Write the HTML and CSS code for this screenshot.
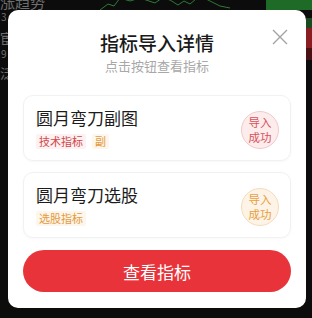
FILE: index.html
```html
<!DOCTYPE html>
<html lang="zh-CN">
<head>
<meta charset="utf-8">
<title>指标导入详情</title>
<link rel="stylesheet" href="styles.css">
</head>
<body>
<div class="backdrop">
  <span class="bg-text bg-t1">涨趋势</span>
  <span class="bg-text bg-l1">3</span>
  <span class="bg-text bg-l2">宦</span>
  <span class="bg-text bg-l3">9</span>
  <span class="bg-text bg-l4">泛</span>
  <svg class="bg-chart" width="140" height="12" viewBox="0 0 140 12"><polyline points="0,12 8,6 14,8 20,0 30,3 40,0 55,5 62,0 70,2 78,7 84,3 90,6 96,1 104,0 112,4 120,8 130,10" fill="none" stroke="#2f7a35" stroke-width="1"/></svg>
  <div class="bg-green"></div>
  <div class="bg-green2"></div>
  <div class="bg-red"></div>
  <div class="bg-red2"></div>
</div>
<div class="modal">
  <button class="close" aria-label="关闭">
    <svg width="16" height="16" viewBox="0 0 16 16"><path d="M1 1 L15 15 M15 1 L1 15" stroke="#a3a3a3" stroke-width="1.4" fill="none"/></svg>
  </button>
  <h1 class="title">指标导入详情</h1>
  <p class="subtitle">点击按钮查看指标</p>
  <div class="list">
    <div class="item">
      <div class="info">
        <div class="name">圆月弯刀副图</div>
        <div class="tags">
          <span class="tag tag-red">技术指标</span>
          <span class="tag tag-orange">副</span>
        </div>
      </div>
      <div class="badge badge-red">导入<br>成功</div>
    </div>
    <div class="item">
      <div class="info">
        <div class="name">圆月弯刀选股</div>
        <div class="tags">
          <span class="tag tag-orange">选股指标</span>
        </div>
      </div>
      <div class="badge badge-orange">导入<br>成功</div>
    </div>
  </div>
  <button class="primary">查看指标</button>
</div>
</body>
</html>
```
FILE: styles.css
```css
* { box-sizing: border-box; }
html, body { margin: 0; padding: 0; }
body {
  width: 312px;
  height: 318px;
  overflow: hidden;
  background: #0c0c0c;
  font-family: "Noto Sans CJK SC", "Noto Sans", sans-serif;
  position: relative;
  padding-top: 10px;
}
.backdrop { position: absolute; inset: 0; }
.bg-text { position: absolute; color: #6e6e6e; line-height: 1; }
.bg-t1 { left: 0; top: -6px; font-size: 15px; }
.bg-l1 { left: 1px; top: 12px; font-size: 10px; }
.bg-l2 { left: 0; top: 31px; font-size: 13px; }
.bg-l3 { left: 1px; top: 49px; font-size: 10px; }
.bg-l4 { left: 0; top: 66px; font-size: 13px; }
.bg-chart { position: absolute; left: 100px; top: -2px; }
.bg-green { position: absolute; left: 266px; top: 0; width: 46px; height: 10px; background: #1d6b27; }
.bg-green2 { position: absolute; left: 306px; top: 18px; width: 6px; height: 10px; background: #1b4a20; }
.bg-red { position: absolute; left: 306px; top: 28px; width: 6px; height: 20px; background: #8a1c22; }
.bg-red2 { position: absolute; left: 306px; top: 48px; width: 6px; height: 12px; background: #4a1114; }

.modal {
  position: relative;
  margin: 0 6px 0 8px;
  width: 298px;
  background: #fff;
  border-radius: 10px;
  padding: 20px 15px 16px;
  display: flex;
  flex-direction: column;
}
.close {
  position: absolute;
  top: 19px;
  right: 18px;
  width: 16px;
  height: 16px;
  padding: 0;
  border: 0;
  background: none;
  display: flex;
}
.title {
  margin: 0;
  text-align: center;
  font-size: 19px;
  line-height: 26px;
  font-weight: 500;
  color: #1a1a1a;
}
.subtitle {
  margin: 1px 0 0;
  text-align: center;
  font-size: 13px;
  line-height: 18px;
  color: #a8a8a8;
}
.list {
  margin-top: 20px;
  display: flex;
  flex-direction: column;
  gap: 11px;
}
.item {
  height: 66px;
  border: 1px solid #f1f1f1;
  border-radius: 10px;
  box-shadow: 0 1px 3px rgba(0,0,0,0.03);
  padding: 10px 11px 0 12px;
  display: flex;
  align-items: center;
  justify-content: space-between;
}
.info { align-self: flex-start; }
.name {
  font-size: 17px;
  line-height: 24px;
  color: #1c1c1c;
}
.tags {
  margin-top: 4px;
  display: flex;
  gap: 6px;
}
.tag {
  font-size: 11px;
  line-height: 15px;
  padding: 0 3px;
  border-radius: 2px;
}
.tag-red { color: #d0474c; background: #fdf1f1; }
.tag-orange { color: #e59a3a; background: #fdf6ec; }
.badge {
  width: 38px;
  height: 38px;
  border-radius: 50%;
  font-size: 11.5px;
  line-height: 15px;
  text-align: center;
  display: flex;
  align-items: center;
  justify-content: center;
  margin-top: -6px;
}
.badge-red { color: #d8525a; background: #fcecec; border: 1px solid #f3c9cb; }
.badge-orange { color: #e8a040; background: #fdf3e6; border: 1px solid #f5dcbc; }
.primary {
  margin-top: 12px;
  height: 42px;
  border: 0;
  border-radius: 21px;
  background: #e8333a;
  color: #fff;
  font-family: inherit;
  font-size: 17px;
  font-weight: 400;
}
```
